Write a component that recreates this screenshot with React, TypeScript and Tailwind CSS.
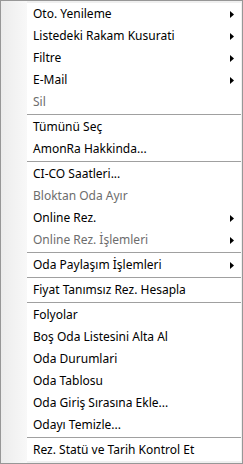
import React from "react";

type Item =
  | { kind: "item"; label: string; disabled?: boolean; sub?: boolean }
  | { kind: "sep" };

const items: Item[] = [
  { kind: "item", label: "Oto. Yenileme", sub: true },
  { kind: "item", label: "Listedeki Rakam Kusurati", sub: true },
  { kind: "item", label: "Filtre", sub: true },
  { kind: "item", label: "E-Mail", sub: true },
  { kind: "item", label: "Sil", disabled: true },
  { kind: "sep" },
  { kind: "item", label: "Tümünü Seç" },
  { kind: "item", label: "AmonRa Hakkinda..." },
  { kind: "sep" },
  { kind: "item", label: "CI-CO Saatleri..." },
  { kind: "item", label: "Bloktan Oda Ayır", disabled: true },
  { kind: "item", label: "Online Rez.", sub: true },
  { kind: "item", label: "Online Rez. İşlemleri", disabled: true, sub: true },
  { kind: "sep" },
  { kind: "item", label: "Oda Paylaşım İşlemleri", sub: true },
  { kind: "sep" },
  { kind: "item", label: "Fiyat Tanımsız Rez. Hesapla" },
  { kind: "sep" },
  { kind: "item", label: "Folyolar" },
  { kind: "item", label: "Boş Oda Listesini Alta Al" },
  { kind: "item", label: "Oda Durumlari" },
  { kind: "item", label: "Oda Tablosu" },
  { kind: "item", label: "Oda Giriş Sırasına Ekle..." },
  { kind: "item", label: "Odayı Temizle..." },
  { kind: "sep" },
  { kind: "item", label: "Rez. Statü ve Tarih Kontrol Et" },
];

function Arrow() {
  return (
    <svg width="4" height="7" viewBox="0 0 4 7" className="block">
      <path d="M0 0 L4 3.5 L0 7 Z" fill="#000" />
    </svg>
  );
}

export default function App() {
  return (
    <div
      className="w-[243px] h-[464px] border border-[#979797] bg-[#f0f0f0] pt-[2px] pb-[2px] pr-[1px] flex"
      style={{ fontFamily: '"Noto Sans", "Open Sans", sans-serif' }}
    >
      <div className="w-[26px] shrink-0 bg-gradient-to-r from-[#ececec] to-[#f8f8f8] -mt-[2px] -mb-[2px]" />
      <div className="flex-1 bg-white flex flex-col">
        {items.map((it, i) =>
          it.kind === "sep" ? (
            <div key={i} className="h-[3px] flex items-center">
              <div className="h-px w-full bg-[#a0a0a0]" />
            </div>
          ) : (
            <div
              key={i}
              className={`h-[22px] flex items-center pl-[6px] pr-[7px] text-[12px] leading-none ${
                it.disabled ? "text-[#6d6d6d]" : "text-black"
              }`}
            >
              <span className="flex-1 whitespace-nowrap">{it.label}</span>
              {it.sub ? <Arrow /> : null}
            </div>
          )
        )}
      </div>
    </div>
  );
}
